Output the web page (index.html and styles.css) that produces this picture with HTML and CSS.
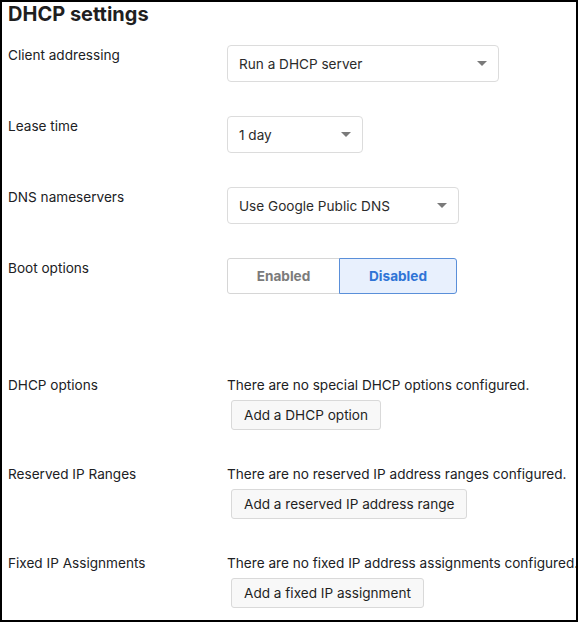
FILE: index.html
```html
<!DOCTYPE html>
<html lang="en">
<head>
    <meta charset="UTF-8">
    <meta name="viewport" content="width=device-width, initial-scale=1.0">
    <title>DHCP settings</title>
    <link rel="stylesheet" href="styles.css">
</head>
<body>
    <div class="panel">
        <h2 class="title">DHCP settings</h2>

        <div class="row">
            <div class="label">Client addressing</div>
            <div class="field">
                <div class="select select-wide">Run a DHCP server<span class="caret"></span></div>
            </div>
        </div>

        <div class="row">
            <div class="label">Lease time</div>
            <div class="field">
                <div class="select select-small">1 day<span class="caret"></span></div>
            </div>
        </div>

        <div class="row">
            <div class="label">DNS nameservers</div>
            <div class="field">
                <div class="select select-medium">Use Google Public DNS<span class="caret"></span></div>
            </div>
        </div>

        <div class="row row-boot">
            <div class="label">Boot options</div>
            <div class="field">
                <div class="toggle">
                    <button class="toggle-btn">Enabled</button>
                    <button class="toggle-btn active">Disabled</button>
                </div>
            </div>
        </div>

        <div class="row">
            <div class="label">DHCP options</div>
            <div class="field">
                <p class="note">There are no special DHCP options configured.</p>
                <button class="btn">Add a DHCP option</button>
            </div>
        </div>

        <div class="row">
            <div class="label">Reserved IP Ranges</div>
            <div class="field">
                <p class="note">There are no reserved IP address ranges configured.</p>
                <button class="btn">Add a reserved IP address range</button>
            </div>
        </div>

        <div class="row">
            <div class="label">Fixed IP Assignments</div>
            <div class="field">
                <p class="note">There are no fixed IP address assignments configured.</p>
                <button class="btn">Add a fixed IP assignment</button>
            </div>
        </div>
    </div>
</body>
</html>
```

FILE: styles.css
```css
body {
    margin: 0;
    font-family: Inter, "Liberation Sans", sans-serif;
    font-size: 13.6px;
    color: #202124;
    background-color: #fff;
}
.panel {
    box-sizing: border-box;
    height: 622px;
    border: 2px solid #000;
    padding: 0 0 0 6px;
    overflow: hidden;
}
.title {
    margin: 0 0 19px 0;
    font-size: 20px;
    line-height: 24px;
    font-weight: 700;
    color: #1f1f1f;
}
.row {
    display: grid;
    grid-template-columns: 219px 1fr;
    margin-bottom: 34px;
}
.row-boot {
    margin-bottom: 81px;
}
.label {
    line-height: 20px;
    white-space: nowrap;
}
.field {
    display: flex;
    flex-direction: column;
    align-items: flex-start;
}
.select {
    box-sizing: border-box;
    height: 37px;
    display: flex;
    align-items: center;
    justify-content: space-between;
    padding: 0 11px 0 11px;
    border: 1px solid #dcdcdc;
    border-radius: 4px;
    background-color: #fff;
    color: #2b2b2b;
    white-space: nowrap;
}
.select-wide {
    width: 272px;
}
.select-small {
    width: 136px;
}
.select-medium {
    width: 232px;
}
.caret {
    width: 0;
    height: 0;
    border-left: 5px solid transparent;
    border-right: 5px solid transparent;
    border-top: 5px solid #7a7a7a;
}
.toggle {
    display: flex;
    height: 36px;
}
.toggle-btn {
    box-sizing: border-box;
    height: 36px;
    font-family: inherit;
    font-size: 13.6px;
    font-weight: 700;
    padding: 0;
    cursor: pointer;
    background-color: #fff;
    color: #7b7b7b;
    border: 1px solid #d6d6d6;
    border-radius: 3px 0 0 3px;
    width: 113px;
}
.toggle-btn.active {
    width: 118px;
    margin-left: -1px;
    background-color: #e8f0fd;
    color: #2f74d6;
    border-color: #5a8fd9;
    border-radius: 0 3px 3px 0;
}
.note {
    margin: 0;
    line-height: 20px;
    white-space: nowrap;
    color: #202124;
}
.btn {
    margin: 5px 0 0 4px;
    height: 30px;
    padding: 0 12px;
    font-family: inherit;
    font-size: 13.6px;
    color: #1f1f1f;
    background-color: #f8f8f8;
    border: 1px solid #d9d9d9;
    border-radius: 3px;
    cursor: pointer;
}
```
